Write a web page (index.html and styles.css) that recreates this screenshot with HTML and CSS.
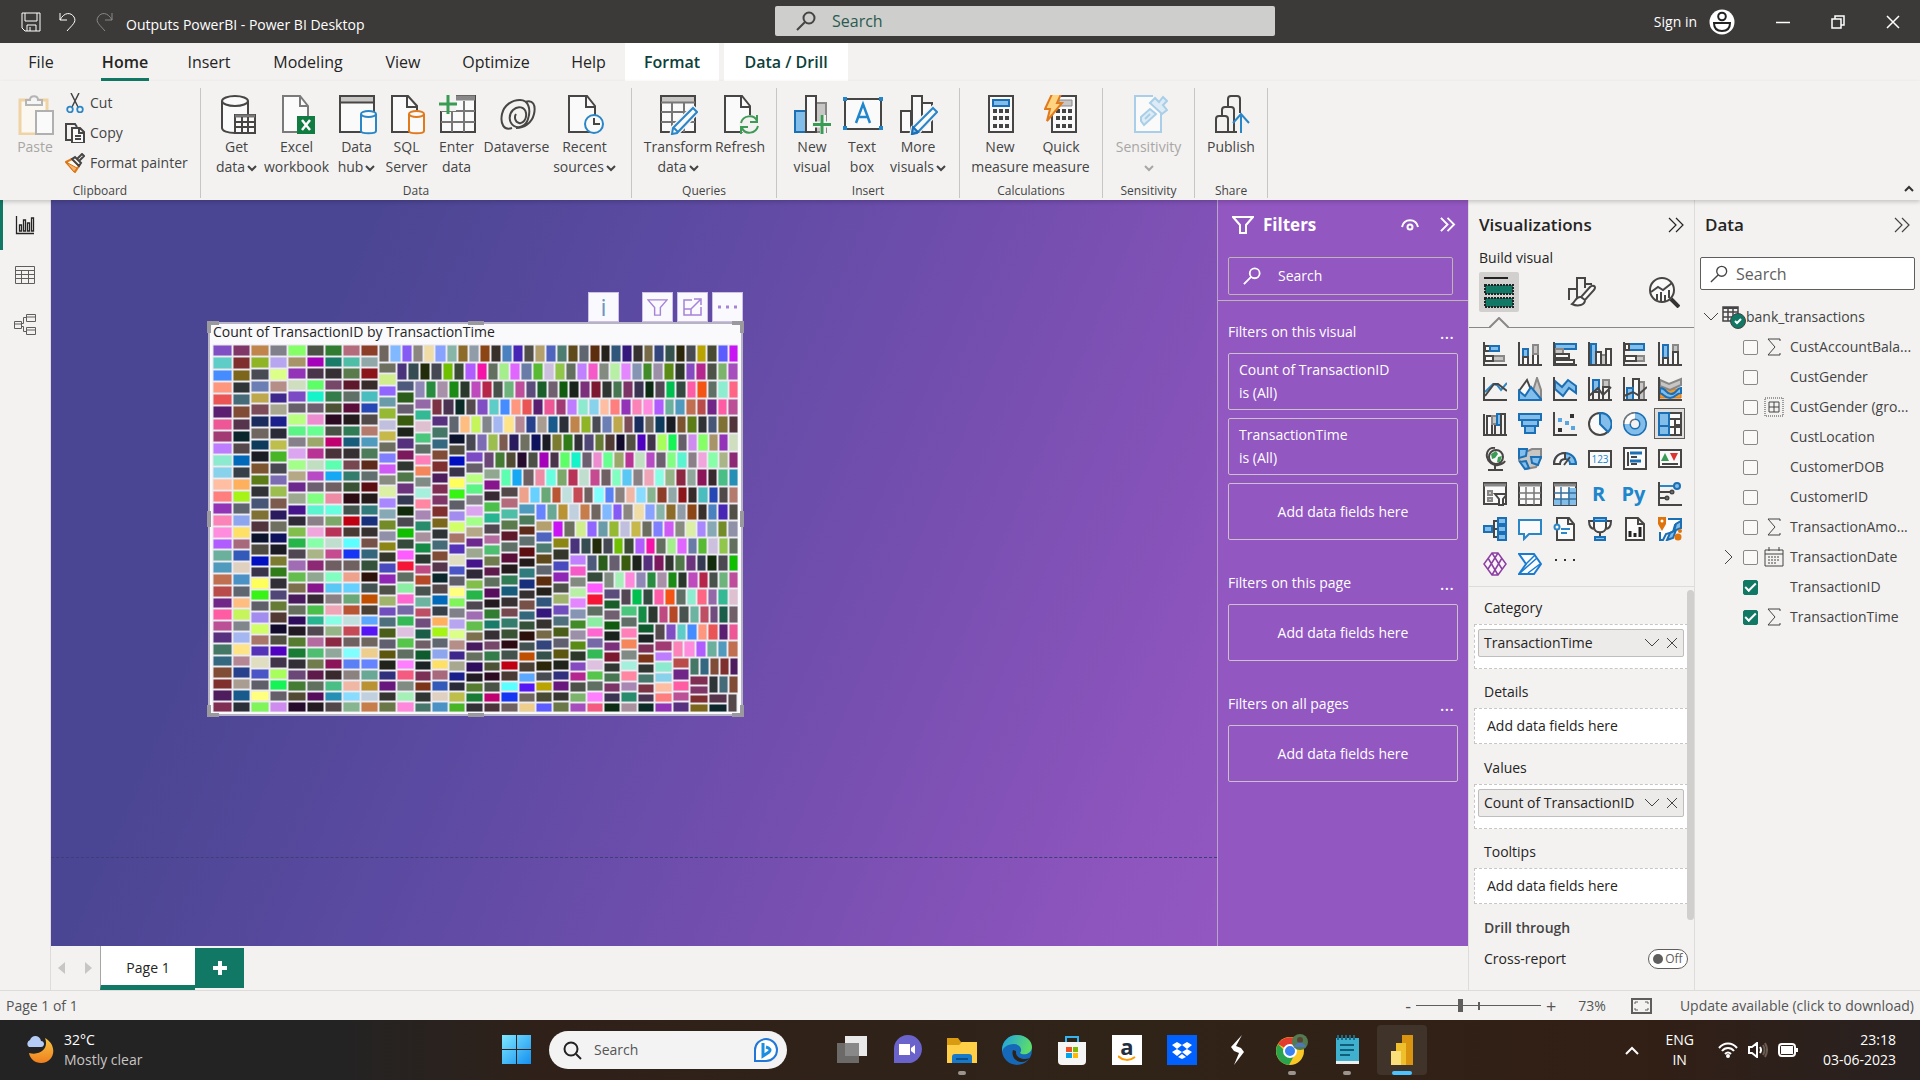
FILE: index.html
```html
<!DOCTYPE html>
<html lang="en">
<head>
<meta charset="utf-8">
<title>Outputs PowerBI - Power BI Desktop</title>
<link rel="stylesheet" href="styles.css">
</head>
<body>
<svg class="defs" aria-hidden="true">
  <symbol id="search" viewBox="0 0 20 20"><path d="M13 1.500a5.500 5.500 0 1 1 0 11 5.500 5.500 0 0 1 0-11zM9 11l-8 8"/></symbol>
  <symbol id="chev" viewBox="0 0 10 8"><path d="M1 2l4 4 4-4"/></symbol>
  <symbol id="expand" viewBox="0 0 16 16"><path d="M1 1l7 7-7 7M8 1l7 7-7 7"/></symbol>
  <symbol id="cross" viewBox="0 0 12 12"><path d="M1 1l10 10M11 1L1 11"/></symbol>
  <symbol id="down" viewBox="0 0 14 8"><path d="M0 0l7 7 7-7"/></symbol>
  <symbol id="sum" viewBox="0 0 14 18"><path d="M13 3V1H1l7 8-7 8h12v-2"/></symbol>
  <symbol id="funnel" viewBox="0 0 22 18"><path d="M1 1h20l-7 8v8H8V9z"/></symbol>
</svg>

<header class="titlebar">
  <div class="quick">
    <button aria-label="Save"><svg width="20" height="20" viewBox="0 0 20 20"><path d="M1 1h18v18H4l-3-3zM4 1v8h12V1M6 19v-6h9v6M9 15v4"/></svg></button>
    <button aria-label="Undo"><svg width="18" height="20" viewBox="0 0 18 20"><path d="M1 1v7h7M1 8c4-8 11-8 14-3 3 5-2 8-7 14"/></svg></button>
    <button aria-label="Redo" class="off"><svg width="18" height="20" viewBox="0 0 18 20"><path d="M17 1v7h-7M17 8C13 0 6 0 3 5c-3 5 2 8 7 14"/></svg></button>
    <h1>Outputs PowerBI - Power BI Desktop</h1>
  </div>
  <label class="topsearch"><svg width="20" height="20"><use href="#search"/></svg><input type="text" placeholder="Search" aria-label="Search"></label>
  <div class="account">
    <button class="signin">Sign in <svg width="26" height="26" viewBox="0 0 26 26"><circle cx="13" cy="13" r="12.500" fill="#fff" stroke="none"/><circle cx="13" cy="7.500" r="3.800" stroke="#222" stroke-width="2"/><path d="M5 14h16c0 5-3 8-8 8s-8-3-8-8z" stroke="#222" stroke-width="2"/></svg></button>
    <button aria-label="Minimize"><svg width="14" height="14" viewBox="0 0 14 14"><path d="M0 7.500h14" stroke-width="1.500"/></svg></button>
    <button aria-label="Restore"><svg width="14" height="14" viewBox="0 0 14 14"><path d="M1 4h9v9H1zM4 4V1h9v9h-3" stroke-width="1.500"/></svg></button>
    <button aria-label="Close"><svg width="14" height="14" viewBox="0 0 14 14"><path d="M1 1l12 12M13 1L1 13" stroke-width="1.500"/></svg></button>
  </div>
</header>

<nav class="tabs">
  <button class="t-file">File</button><button class="t-home on">Home</button><button class="t-insert">Insert</button><button class="t-model">Modeling</button><button class="t-view">View</button><button class="t-opt">Optimize</button><button class="t-help">Help</button><button class="ctx t-format">Format</button><button class="ctx t-drill">Data / Drill</button>
</nav>

<section class="ribbon">
  <div class="group g-clip">
    <div class="items">
      <button class="big off w50"><svg width="36" height="40" viewBox="0 0 36 40"><path d="M2 5h27v34H2z" fill="#fbf8f2" stroke="#f0d3a4" stroke-width="3"/><path d="M8 10V5h4c0-5 8-5 8 0h4v5z" fill="#f5f5f5" stroke="#b5b5b5" stroke-width="2"/><path d="M18 16h17v23H18z" fill="#fafafa" stroke="#b0b0b0" stroke-width="2"/></svg><span>Paste</span></button>
      <div class="small">
        <button><svg width="20" height="20" viewBox="0 0 20 20"><path d="M6 0l7 14M14 0L7 14" stroke="#444" stroke-width="1.500"/><circle cx="5" cy="16.500" r="2.800" stroke="#2a86c7" stroke-width="1.800"/><circle cx="15" cy="16.500" r="2.800" stroke="#2a86c7" stroke-width="1.800"/></svg>Cut</button>
        <button><svg width="20" height="20" viewBox="0 0 20 20"><path d="M7 17H1V1h9l2 3" class="k"/><path d="M7 5h8l4 4v11H7zM14 5v5h5M10 13h6M10 16h6" class="k w"/></svg>Copy</button>
        <button><svg width="20" height="20" viewBox="0 0 20 20"><path d="M1 9l6-3 7 7-4 6z" fill="#fff" stroke="#e07a1c" stroke-width="2"/><path d="M1 9l11 6-3 4z" fill="#f6b26b" stroke="#d9700f"/><path d="M7 6l3-2 6 6-2 3zM12 6l5-5 2 2-5 5" class="k w"/></svg>Format painter</button>
      </div>
    </div>
    <h2>Clipboard</h2>
  </div>
  <div class="group g-data">
    <div class="items">
      <button class="big w50"><svg width="36" height="40" viewBox="0 0 36 40"><path d="M2 6v27c0 3 6 5 13 5s13-2 13-5V6" class="k w"/><ellipse cx="15" cy="6" rx="13" ry="5" class="k w"/><path d="M15 20h20v18H15z" class="k w"/><path d="M15 21h20" stroke="#777" stroke-width="3"/><path d="M15 27h20M15 32h20M22 22v16M28 22v16" class="k"/></svg><span>Get<br>data<svg class="cv" width="10" height="8"><use href="#chev"/></svg></span></button>
      <button class="big w70"><svg width="36" height="40" viewBox="0 0 36 40"><path d="M3 1h17l8 10v26H3z" fill="#fbfbfb" stroke="#7a7a7a" stroke-width="2"/><path d="M20 1v10h8" stroke="#7a7a7a" stroke-width="2"/><path d="M17 21h18v18H17z" fill="#107c41"/><path d="M22 25l8 10M30 25l-8 10" stroke="#fff" stroke-width="2.500"/></svg><span>Excel<br>workbook</span></button>
      <button class="big w50"><svg width="38" height="40" viewBox="0 0 38 40"><path d="M1 1h34v36H1z" class="k w"/><path d="M2 2h32v5H2z" fill="#c8c6c4"/><path d="M1 7.500h34" class="k"/><path d="M22 19v17c0 3 15 3 15 0V19" class="bl w"/><ellipse cx="29.500" cy="19" rx="7.500" ry="3" class="bl w"/></svg><span>Data<br>hub<svg class="cv" width="10" height="8"><use href="#chev"/></svg></span></button>
      <button class="big w50"><svg width="36" height="40" viewBox="0 0 36 40"><path d="M2 1h16l9 10v26H2z" class="k w"/><path d="M17 1v11h10" class="k"/><path d="M19 19v17c0 3 15 3 15 0V19" class="or w"/><ellipse cx="26.500" cy="19" rx="7.500" ry="3" class="or w"/></svg><span>SQL<br>Server</span></button>
      <button class="big w50"><svg width="38" height="40" viewBox="0 0 38 40"><path d="M2 1h34v36H2z" class="k w"/><path d="M2 3h34" stroke="#888" stroke-width="5"/><path d="M2 16h34M2 27h34M13 6v31M25 6v31" stroke="#777" stroke-width="2"/><path d="M0 0h17v16H0z" fill="#f3f2f1"/><path d="M9 0v19M0 9h18" stroke="#3a9b54" stroke-width="3"/></svg><span>Enter<br>data</span></button>
      <button class="big w70"><svg width="36" height="40" viewBox="0 0 36 40"><path d="M12 33C4 36 0 29 2 19 4 10 12 5 20 5c9 0 11 10 8 19-2 7-9 10-14 7s-6-11-1-16 12-3 13 3-3 11-7 10-5-6-3-9M25 7c8-3 11 3 9 12-2 9-10 14-18 14" class="k"/></svg><span>Dataverse</span></button>
      <button class="big w66"><svg width="36" height="40" viewBox="0 0 36 40"><path d="M1 1h18l8 10v26H1z" class="k w"/><path d="M18 1v11h9" class="k"/><circle cx="26" cy="29" r="9" class="bl w"/><path d="M26 23v6h6" class="k"/></svg><span>Recent<br>sources<svg class="cv" width="10" height="8"><use href="#chev"/></svg></span></button>
    </div>
    <h2>Data</h2>
  </div>
  <div class="group g-query">
    <div class="items">
      <button class="big w72"><svg width="38" height="40" viewBox="0 0 38 40"><path d="M1 1h34v36H1z" class="k w"/><path d="M2 2h32v5H2z" fill="#c8c6c4"/><path d="M1 7.500h34M1 17h34M1 27h34M12 8v29M24 8v29" stroke="#777" stroke-width="2"/><path d="M33 13l4 4-20 21-5 1 1-6z" fill="#f8fcff" stroke="#f3f2f1" stroke-width="5"/><path d="M33 13l4 4-20 21-5 1 1-6zM13 32l5 5" class="bl w"/></svg><span>Transform<br>data<svg class="cv" width="10" height="8"><use href="#chev"/></svg></span></button>
      <button class="big w52"><svg width="36" height="40" viewBox="0 0 36 40"><path d="M2 1h17l8 10v26H2z" class="k w"/><path d="M18 1v11h9" class="k"/><circle cx="26" cy="30" r="10" fill="#f3f2f1"/><path d="M18 28c2-8 13-9 16-2M34 20v7h-7M35 31c-2 8-13 9-16 2M18 39v-7h7" stroke="#3f9a56" stroke-width="2"/></svg><span>Refresh</span></button>
    </div>
    <h2>Queries</h2>
  </div>
  <div class="group g-insert">
    <div class="items">
      <button class="big w50"><svg width="38" height="40" viewBox="0 0 38 40"><path d="M22 8h10v29H22z" fill="#c8c6c4" stroke="#888" stroke-width="2"/><path d="M1 16h11v21H1z" class="bf"/><path d="M12 1h10v36H12z" class="k w"/><path d="M18 29.500h20M29 20v20" stroke="#f3f2f1" stroke-width="6"/><path d="M19 29.500h18M28 20v19" stroke="#3a9b54" stroke-width="3"/></svg><span>New<br>visual</span></button>
      <button class="big w50"><svg width="40" height="40" viewBox="0 0 40 40"><path d="M2 4h36v30H2z" class="k w"/><path d="M13 28l7-19 7 19M15 22h10" stroke="#2086cc" stroke-width="2.500"/><path d="M0 2h4v4H0zM36 2h4v4h-4zM0 31h4v4H0zM36 31h4v4h-4z" fill="#2086cc"/></svg><span>Text<br>box</span></button>
      <button class="big w62"><svg width="38" height="40" viewBox="0 0 38 40"><path d="M22 8h10v29H22zM1 16h10v21H1zM12 1h10v36H12z" class="k w"/><path d="M33 13l4 4-20 21-5 1 1-6z" fill="#fff" stroke="#f3f2f1" stroke-width="5"/><path d="M33 13l4 4-20 21-5 1 1-6z" class="bl w"/><path d="M13 32l5 5-6 2z" class="bf"/></svg><span>More<br>visuals<svg class="cv" width="10" height="8"><use href="#chev"/></svg></span></button>
    </div>
    <h2>Insert</h2>
  </div>
  <div class="group g-calc">
    <div class="items">
      <button class="big w60"><svg width="36" height="40" viewBox="0 0 36 40"><path d="M6 1h24v36H6z" class="k w"/><path d="M10 5h16v6H10z" class="bf"/><path d="M10 16h16M10 23h16M10 31h16" stroke="#444" stroke-width="4" stroke-dasharray="4 2"/></svg><span>New<br>measure</span></button>
      <button class="big w62"><svg width="36" height="40" viewBox="0 0 36 40"><path d="M8 1h24v36H8z" class="k w"/><path d="M15 5h13v6H15z" fill="#c8c6c4" stroke="#888"/><path d="M12 16h16M12 23h16M12 31h16" stroke="#444" stroke-width="4" stroke-dasharray="4 2"/><path d="M8-1h9l-4 9h5L3 26l3-12H1z" fill="#ffd480" stroke="#e07a1c" stroke-width="2"/></svg><span>Quick<br>measure</span></button>
    </div>
    <h2>Calculations</h2>
  </div>
  <div class="group g-sens">
    <div class="items">
      <button class="big off w80"><svg width="36" height="40" viewBox="0 0 36 40"><path d="M21 1H3v36h26V18" fill="#fafafa" stroke="#a9cfe8" stroke-width="2"/><path d="M9 22l9-8 6 5-12 11-3-4zM13 24l5-5M18 8l5-5 4 4 4-5 4 4-4 4 4 5-5 4z" fill="#dcebf5" stroke="#a9cfe8" stroke-width="2"/></svg><span>Sensitivity<br><svg class="cv" width="10" height="8"><use href="#chev"/></svg></span></button>
    </div>
    <h2>Sensitivity</h2>
  </div>
  <div class="group g-share">
    <div class="items">
      <button class="big w60"><svg width="36" height="40" viewBox="0 0 36 40"><path d="M14 12V4q0-3 3-3h6q3 0 3 3v14M8 21v-6q0-3 3-3h6q3 0 3 3v22M2 37V24q0-3 3-3h6q3 0 3 3v13zM14 37h9" class="k"/><path d="M27 38V20M19 28l8-9 8 9" class="bl"/></svg><span>Publish</span></button>
    </div>
    <h2>Share</h2>
  </div>
  <button class="collapse" aria-label="Collapse ribbon"><svg width="10" height="8" viewBox="0 0 10 8"><path d="M1 6l4-4 4 4"/></svg></button>
</section>

<main>
  <div class="left">
    <div class="work">
      <nav class="rail">
        <button class="on" aria-label="Report view"><svg width="20" height="20" viewBox="0 0 20 20"><path d="M1.500 1v17.500H19M4.500 16V10h2v6zM8.500 16V5h2v11zM12.500 16V8h2v8zM16.500 16V3h2v13z" stroke-width="1.300"/></svg></button>
        <button aria-label="Data view"><svg width="22" height="20" viewBox="0 0 22 20"><path d="M1.500 1.500h19v17h-19zM1 5.500h20M1 9.500h20M1 13.500h20M7.500 5v14M14.500 5v14"/></svg></button>
        <button aria-label="Model view"><svg width="24" height="24" viewBox="0 0 24 24"><path d="M13.500 1.500h9v7h-9zM1.500 8.500h7v7h-7zM13.500 14.500h9v7h-9zM8.500 10.500h2v-6h3M8.500 13.500h2v5h3M13 4h10M1 11h8M13 17h10"/></svg></button>
      </nav>
      <div class="canvas">
        <div class="fold"></div>
        <div class="vtools">
          <button class="info" aria-label="Information">i</button>
          <button aria-label="Filter"><svg width="21" height="19" viewBox="0 0 22 18"><use href="#funnel"/></svg></button>
          <button aria-label="Focus mode"><svg width="19" height="18" viewBox="0 0 19 18"><path d="M9 2H1v15h17V9M1 11h7v6M8 11l9-9M11 1h7v6"/></svg></button>
          <button aria-label="More options"><svg width="20" height="6" viewBox="0 0 20 6"><path d="M0 3h3M8 3h3M16 3h3" stroke-width="3"/></svg></button>
        </div>
        <figure class="visual">
          <figcaption>Count of TransactionID by TransactionTime</figcaption>
          <svg id="treemap" viewBox="0 0 526 368" role="img" aria-label="Treemap"></svg>
          <i class="h tl"></i><i class="h tr"></i><i class="h bl2"></i><i class="h br"></i><i class="h tc"></i><i class="h bc"></i><i class="h ml"></i><i class="h mr"></i>
        </figure>
      </div>
      <aside class="filters">
        <div class="fhead"><svg width="22" height="18"><use href="#funnel"/></svg><h2>Filters</h2><button aria-label="Hide"><svg width="18" height="12" viewBox="0 0 18 12"><path d="M1 8c2-9 14-9 16 0"/><circle cx="9" cy="8" r="2.500"/></svg></button><button aria-label="Collapse"><svg width="17" height="15"><use href="#expand"/></svg></button></div>
        <label class="fsearch"><svg width="18" height="18"><use href="#search"/></svg><input type="text" placeholder="Search" aria-label="Search filters"></label>
        <div class="flist">
          <section><h3>Filters on this visual<button aria-label="More">...</button></h3>
            <div class="card">Count of TransactionID<br>is (All)</div>
            <div class="card">TransactionTime<br>is (All)</div>
            <div class="card add">Add data fields here</div></section>
          <section><h3>Filters on this page<button aria-label="More">...</button></h3>
            <div class="card add">Add data fields here</div></section>
          <section><h3>Filters on all pages<button aria-label="More">...</button></h3>
            <div class="card add">Add data fields here</div></section>
        </div>
      </aside>
    </div>
    <div class="pages">
      <button aria-label="Previous page"><svg width="7" height="12" viewBox="0 0 7 12"><path d="M7 0v12L0 6z"/></svg></button>
      <button aria-label="Next page"><svg width="7" height="12" viewBox="0 0 7 12"><path d="M0 0v12l7-6z"/></svg></button>
      <button class="page">Page 1</button><button class="plus" aria-label="New page"><svg width="14" height="14" viewBox="0 0 14 14"><path d="M7 0v14M0 7h14"/></svg></button>
    </div>
  </div>

  <aside class="viz">
    <div class="phead"><h2>Visualizations</h2><button aria-label="Collapse"><svg width="16" height="16"><use href="#expand"/></svg></button></div>
    <h3>Build visual</h3>
    <div class="modes">
      <button class="on" aria-label="Build visual"><svg width="32" height="32" viewBox="0 0 32 32"><path d="M1 2h24" stroke="#222" stroke-width="2"/><path d="M2 9h28v9H2zM2 22h28v9H2z" fill="#117865" stroke="#222" stroke-width="2" stroke-dasharray="2 1"/></svg></button>
      <button aria-label="Format visual"><svg width="28" height="30" viewBox="0 0 28 30"><path d="M1 23V12h8V1h8v10M9 12v9M17 7h7" class="k"/><path d="M26 9q2 1 0 4l-9 10-4-3 9-10q2-2 4-1zM13 20c-5-1-5 4-9 7 6 3 13 1 13-4" class="k w"/></svg></button>
      <button aria-label="Analytics"><svg width="31" height="31" viewBox="0 0 31 31"><circle cx="13" cy="13" r="12" class="k w"/><path d="M2 15l7-5 5 3 9-7M8 23v-6M12 24v-9M16 24v-6M20 21v-8" class="k"/><path d="M22 22l8 8" stroke="#333" stroke-width="4"/></svg></button>
    </div>
    <svg class="caret" width="20" height="11" viewBox="0 0 20 11"><path d="M0 11L10 1l10 10"/></svg>
    <div class="gallery">
      <button aria-label="Stacked bar"><svg viewBox="0 0 24 24"><path d="M2 4h14v5H2z" class="k w"/><path d="M7 4h9v5H7z" class="bf"/><path d="M2 14h19v5H2z" class="gr"/><path d="M2 14h8v5H2z" class="k w"/><path d="M1 0v23h23" class="k"/></svg></button>
      <button aria-label="Stacked column"><svg viewBox="0 0 24 24"><path d="M5 7h5v8H5z" class="bf"/><path d="M5 15h5v8H5zM15 12h5v11h-5z" class="k w"/><path d="M15 3h5v9h-5z" class="gr"/><path d="M1 0v23h23" class="k"/></svg></button>
      <button aria-label="Clustered bar"><svg viewBox="0 0 24 24"><path d="M2 2h21v5H2z" class="bf"/><path d="M2 7h8v5H2z" class="gr"/><path d="M2 12h14v4H2zM2 18h19v4H2z" class="k w"/><path d="M1 0v23h23" class="k"/></svg></button>
      <button aria-label="Clustered column"><svg viewBox="0 0 24 24"><path d="M3 2h5v21H3z" class="bf"/><path d="M13 13h5v10h-5z" class="gr"/><path d="M8 10h5v13H8zM18 7h5v16h-5z" class="k w"/><path d="M1 0v23h23" class="k"/></svg></button>
      <button aria-label="100% bar"><svg viewBox="0 0 24 24"><path d="M2 2h19v6H2z" class="bf"/><path d="M2 14h19v5H2z" class="gr"/><path d="M2 14h11v5H2zM2 2h4v6H2z" class="k w"/><path d="M1 0v23h23" class="k"/></svg></button>
      <button aria-label="100% column"><svg viewBox="0 0 24 24"><path d="M5 3h5v13H5z" class="bf"/><path d="M15 3h5v7h-5z" class="gr"/><path d="M5 16h5v7H5zM15 10h5v13h-5z" class="k w"/><path d="M1 0v23h23" class="k"/></svg></button>
      <button aria-label="Line"><svg viewBox="0 0 24 24"><path d="M2 15l8-8 4 1 4 5 6-7" class="bl"/><path d="M2 19l9-12h4l9 7" class="k"/><path d="M1 0v23h23" class="k"/></svg></button>
      <button aria-label="Area"><svg viewBox="0 0 24 24"><path d="M12 23l7-22 4 12v10z" class="gr"/><path d="M1 14L9 3l8 20H1z" class="k w"/><path d="M1 14l6 5 6-9 10 12v1H1z" class="bf"/></svg></button>
      <button aria-label="Stacked area"><svg viewBox="0 0 24 24"><path d="M2 4l7 6 6-7 8 6v7l-7-5-6 8-8-7z" class="bf"/><path d="M1 0v23h23" class="k"/></svg></button>
      <button aria-label="Line and stacked column"><svg viewBox="0 0 24 24"><path d="M5 3h6v12H5z" class="bf"/><path d="M15 3h6v7h-6z" class="gr"/><path d="M5 15h6v8H5zM15 10h6v13h-6zM1 19l9-8 5 7 8-8" class="k"/><path d="M1 0v23h23" class="k"/></svg></button>
      <button aria-label="Line and clustered column"><svg viewBox="0 0 24 24"><path d="M16 5h5v18h-5z" class="gr"/><path d="M10 2h6v21h-6z" class="k w"/><path d="M4 11h6v12H4z" class="bf"/><path d="M1 19l9-4 5 3 9-8M1 0v23h23" class="k"/></svg></button>
      <button aria-label="Ribbon"><svg viewBox="0 0 24 24"><path d="M2 12h21v9H2z" fill="#f39a2e" stroke="#d9700f"/><path d="M2 3l9 4 12-5v6L12 13 2 9z" class="gr"/><path d="M2 11c7 0 5 6 11 6s5-6 10-6v5c-5 0-5 5-11 5S6 17 2 16z" class="bf"/><path d="M1 0v23h23" class="k"/></svg></button>
      <button aria-label="Waterfall"><svg viewBox="0 0 24 24"><path d="M4 4h5v19H4z" class="k w"/><path d="M9 4h5v8H9z" class="gr"/><path d="M14 2h4v11h-4z" class="bf"/><path d="M18 2h4v21h-4zM12 13v10M1 2v21h23" class="k"/></svg></button>
      <button aria-label="Funnel"><svg viewBox="0 0 24 24"><path d="M1 2h22v6H1zM4 8h16v6H4zM7 14h10v7H7z" class="bf"/></svg></button>
      <button aria-label="Scatter"><svg viewBox="0 0 24 24"><path d="M5 6h4v4H5zM12 9h4v4h-4zM18 14h4v4h-4z" fill="#5aa5de"/><path d="M17 2h4v4h-4zM5 16h4v4H5z" fill="#333"/><path d="M1 0v23h23" class="k"/></svg></button>
      <button aria-label="Pie"><svg viewBox="0 0 24 24"><circle cx="12" cy="12" r="11" class="k w"/><path d="M12 1a11 11 0 0 1 8 19l-8-8z" class="bf"/></svg></button>
      <button aria-label="Donut"><svg viewBox="0 0 24 24"><circle cx="12" cy="12" r="8" stroke="#1a6fb5" stroke-width="8"/><circle cx="12" cy="12" r="8" stroke="#83bdea" stroke-width="5"/><path d="M4 12a8 8 0 0 1 8-8" stroke="#777" stroke-width="8"/><path d="M4 12a8 8 0 0 1 8-8" stroke="#fff" stroke-width="5"/></svg></button>
      <button aria-label="Treemap" class="sel"><svg viewBox="0 0 24 24"><path d="M1 1h22v22H1zM12 7h11M17 7v16M17 13h6M12 15h11" class="k w"/><path d="M1 1h10v22H1zM1 14h10" class="bf"/></svg></button>
      <button aria-label="Map"><svg viewBox="0 0 24 24"><circle cx="13" cy="10" r="7" class="k w"/><path d="M8 7l5-3 2 3-3 4-3 1zM15 10l4-1-2 6h-3z" fill="#3a9b54"/><path d="M12 1C6 0 3 5 4 10s6 9 11 8 6-2 7-4M12 18v4M5 23h15" class="k"/></svg></button>
      <button aria-label="Filled map"><svg viewBox="0 0 24 24"><path d="M1 2l9 2 4-2 9 0v9l-5 9-5 1-4 1-8-9z" class="gr"/><path d="M1 2h8l-1 7-7 2zM13 10h10l-3 8-6-2zM2 15l6-1 3 7-4 1z" class="bf"/></svg></button>
      <button aria-label="Gauge"><svg viewBox="0 0 24 24"><path d="M1 17a11 11 0 0 1 22 0h-6a5 5 0 0 0-10 0z" class="bf"/><path d="M1 17C1 11 5 6 12 6v6c-3 0-5 2-5 5zM11 18l6-8" class="k w"/></svg></button>
      <button aria-label="Card"><svg viewBox="0 0 24 24"><path d="M1 4h22v16H1z" class="k w"/><text x="12" y="16" class="n">123</text></svg></button>
      <button aria-label="Multi-row card"><svg viewBox="0 0 24 24"><path d="M1 1h22v21H1z" class="k w"/><path d="M5 5v14M8 10h6M8 17h6" class="k"/><path d="M7 6h12M7 14h11" stroke="#1a6fb5" stroke-width="3"/></svg></button>
      <button aria-label="KPI"><svg viewBox="0 0 24 24"><path d="M1 3h22v17H1z" class="k w"/><path d="M3 14l4-8 4 8z" fill="#3a9b54"/><path d="M12 6h8l-4 8z" fill="#d33"/><path d="M4 17h16" class="k"/></svg></button>
      <button aria-label="Slicer"><svg viewBox="0 0 24 24"><path d="M1 1h22v21H1z" class="k w"/><path d="M1 3h22" stroke="#888" stroke-width="3"/><path d="M5 9h4v4H5zM5 16h4v3H5z" class="gr"/><path d="M12 12h12l-4 5v6h-4v-6z" class="k w"/></svg></button>
      <button aria-label="Table"><svg viewBox="0 0 24 24"><path d="M1 1h22v22H1z" class="k w"/><path d="M1 3h22" stroke="#888" stroke-width="3"/><path d="M1 11h22M1 17h22M8 5v18M16 5v18" stroke="#777" stroke-width="1.500"/></svg></button>
      <button aria-label="Matrix"><svg viewBox="0 0 24 24"><path d="M1 1h22v22H1z" class="k w"/><path d="M15 6h8v17H1v-6h14z" fill="#83bdea"/><path d="M1 3h22" stroke="#888" stroke-width="3"/><path d="M1 11h22M1 17h22M8 5v18M16 5v18" stroke="#386f9d" stroke-width="1.500"/></svg></button>
      <button class="ry">R</button>
      <button class="ry">Py</button>
      <button aria-label="Key influencers"><svg viewBox="0 0 24 24"><path d="M2 4h15" class="bl"/><circle cx="19" cy="4" r="3" class="bf"/><path d="M2 10h10M2 16h6" class="k"/><circle cx="14" cy="10" r="1.500" class="k"/><circle cx="9" cy="16" r="1.500" class="k"/><path d="M1 0v23h23" class="k"/></svg></button>
      <button aria-label="Decomposition tree"><svg viewBox="0 0 24 24"><path d="M8 12h7M11 12V4h4M11 12v8h4" class="k"/><path d="M1 9h8v6H1zM15 1h8v6h-8zM15 9h8v6h-8zM15 17h8v6h-8z" class="bf"/></svg></button>
      <button aria-label="Q and A"><svg viewBox="0 0 24 24"><path d="M1 3h22v14H11l-5 5v-5H1z" class="bl w"/></svg></button>
      <button aria-label="Narrative"><svg viewBox="0 0 24 24"><path d="M4 1h12l5 6v16H4zM15 1v6h6" class="k w"/><path d="M8 12h9M8 16h6" class="bl"/><circle cx="4" cy="10" r="2.500" class="bl w"/></svg></button>
      <button aria-label="Goals"><svg viewBox="0 0 24 24"><path d="M6 1h12v9c0 7-12 7-12 0zM6 4H1c0 6 3 8 6 8M18 4h5c0 6-3 8-6 8M12 15v5" class="k w"/><path d="M6 1h12v3H6zM7 20h10v3H7z" class="bf"/></svg></button>
      <button aria-label="Paginated report"><svg viewBox="0 0 24 24"><path d="M3 1h12l6 6v16H3zM15 1v6h6" class="k w"/><path d="M7 20v-6M12 20v-4M17 20V10" stroke="#222" stroke-width="3"/></svg></button>
      <button aria-label="Azure map"><svg viewBox="0 0 24 24"><path d="M10 2h13v3l-6 3-2 7-7 2-3 6H2v-8" fill="#fff" stroke="#1a6fb5" stroke-width="2"/><path d="M23 4v7l-5 2-3 8-6 2 3-7 4-2 2-7z" class="bf"/><path d="M4 14L0 7V0h8v7z" fill="#e0740c"/><circle cx="4" cy="4" r="1.500" fill="#fff"/><circle cx="20" cy="20" r="3.500" fill="#e0740c"/><circle cx="22" cy="14" r="2" fill="#e0740c"/></svg></button>
      <button aria-label="Power Apps"><svg viewBox="0 0 24 24"><path d="M9 1h6l8 11-8 11H9L1 12zM15 1L5 17M9 1l10 16M5 6l10 17M19 6L9 23" stroke="#8b3fa0" stroke-width="1.500" fill="#faf5fb"/></svg></button>
      <button aria-label="Power Automate"><svg viewBox="0 0 24 24"><path d="M1 2h15l7 10-7 10H1l7-10z" stroke="#1a7bd0" stroke-width="2" fill="#fafcff"/><path d="M8 12l9-9M2 21L19 6M10 21l12-9" stroke="#1a7bd0" stroke-width="1.500"/></svg></button>
      <button aria-label="More visuals"><svg viewBox="0 0 24 24"><path d="M2 8h2M11 8h2M20 8h2" stroke="#333" stroke-width="2"/></svg></button>
    </div>
    <div class="wells">
      <h4>Category</h4>
      <div class="well"><div class="chip">TransactionTime<button aria-label="Options"><svg width="14" height="8"><use href="#down"/></svg></button><button aria-label="Remove"><svg width="12" height="12"><use href="#cross"/></svg></button></div></div>
      <h4>Details</h4>
      <div class="well empty">Add data fields here</div>
      <h4>Values</h4>
      <div class="well"><div class="chip">Count of TransactionID<button aria-label="Options"><svg width="14" height="8"><use href="#down"/></svg></button><button aria-label="Remove"><svg width="12" height="12"><use href="#cross"/></svg></button></div></div>
      <h4>Tooltips</h4>
      <div class="well empty">Add data fields here</div>
      <h4 class="strong">Drill through</h4>
      <div class="cross"><span>Cross-report</span><button role="switch" aria-checked="false" aria-label="Cross-report"><i></i>Off</button></div>
      <div class="thumb"></div>
    </div>
  </aside>

  <aside class="data">
    <div class="phead"><h2>Data</h2><button aria-label="Collapse"><svg width="16" height="16"><use href="#expand"/></svg></button></div>
    <label class="dsearch"><svg width="18" height="18"><use href="#search"/></svg><input type="text" placeholder="Search" aria-label="Search data"></label>
    <div class="table"><svg class="tw" width="14" height="8"><use href="#down"/></svg><svg width="24" height="24" viewBox="0 0 24 24"><path d="M1 2h15v14H1zM1 7h15M1 12h15M6 4v12M11 4v12" stroke="#444" stroke-width="1.500"/><path d="M1 3h15" stroke="#444" stroke-width="2"/><circle cx="16" cy="16" r="7.500" fill="#117865"/><path d="M13 16l2 2 4-4" stroke="#fff" stroke-width="2"/></svg>bank_transactions</div>
    <ul>
      <li><span></span><input type="checkbox" id="f1"><svg width="14" height="18"><use href="#sum"/></svg><label for="f1">CustAccountBala...</label></li>
      <li><span></span><input type="checkbox" id="f2"><b></b><label for="f2">CustGender</label></li>
      <li><span></span><input type="checkbox" id="f3"><svg width="20" height="20" viewBox="0 0 20 20"><path d="M1 1h18v18H1z" stroke-dasharray="1 1"/><path d="M5 5h10v10H5zM10 5v10M5 10h10"/></svg><label for="f3">CustGender (gro...</label></li>
      <li><span></span><input type="checkbox" id="f4"><b></b><label for="f4">CustLocation</label></li>
      <li><span></span><input type="checkbox" id="f5"><b></b><label for="f5">CustomerDOB</label></li>
      <li><span></span><input type="checkbox" id="f6"><b></b><label for="f6">CustomerID</label></li>
      <li><span></span><input type="checkbox" id="f7"><svg width="14" height="18"><use href="#sum"/></svg><label for="f7">TransactionAmo...</label></li>
      <li><span><svg width="8" height="14" viewBox="0 0 8 14"><path d="M0 0l7 7-7 7"/></svg></span><input type="checkbox" id="f8"><svg width="20" height="20" viewBox="0 0 20 20"><path d="M1 3h18v16H1zM1 7h18M5 0v4M15 0v4"/><path d="M4 10h12M4 13h12M4 16h8" stroke-dasharray="2 1"/></svg><label for="f8">TransactionDate</label></li>
      <li><span></span><input type="checkbox" id="f9" checked><b></b><label for="f9">TransactionID</label></li>
      <li><span></span><input type="checkbox" id="f10" checked><svg width="14" height="18"><use href="#sum"/></svg><label for="f10">TransactionTime</label></li>
    </ul>
  </aside>
</main>

<footer class="status">
  <span>Page 1 of 1</span>
  <div class="zoom"><button aria-label="Zoom out">-</button><input type="range" min="10" max="190" value="73" aria-label="Zoom"><button aria-label="Zoom in">+</button></div>
  <span class="pct">73%</span>
  <button class="fit" aria-label="Fit to page"><svg width="21" height="16" viewBox="0 0 21 16"><path d="M1 1h19v14H1z" stroke-width="2"/><path d="M7 4H4v2M14 4h3v2M7 12H4v-2M14 12h3v-2"/></svg></button>
  <a href="#">Update available (click to download)</a>
</footer>

<div class="taskbar">
  <button class="weather"><svg width="30" height="30" viewBox="0 0 30 30"><defs><linearGradient id="mn" x2="0" y2="1"><stop stop-color="#f6c544"/><stop offset="1" stop-color="#f07f1e"/></linearGradient></defs><path d="M20 3c13 7 10 25-4 25C10 28 5 24 4 18c12 3 20-5 16-15z" fill="url(#mn)"/><path d="M4 12a4 4 0 0 1 1-7c2-6 10-5 11 1 4 0 4 6 0 6z" fill="#b5cdf6"/></svg><span>32°C<br><em>Mostly clear</em></span></button>
  <div class="apps">
    <button class="start" aria-label="Start"><svg width="30" height="30" viewBox="0 0 30 30"><path d="M0 0h14v14H0zM15 0h14v14H15zM0 15h14v14H0zM15 15h14v14H15z" fill="url(#wn)"/><defs><linearGradient id="wn" x2="1" y2="1"><stop stop-color="#7fe8ff"/><stop offset="1" stop-color="#1490f0"/></linearGradient></defs></svg></button>
    <label class="tsearch"><svg width="19" height="19" viewBox="0 0 19 19"><circle cx="8" cy="8" r="6.500"/><path d="M13 13l5 5"/></svg><input type="text" placeholder="Search" aria-label="Search Windows"><svg width="26" height="26" viewBox="0 0 26 26"><path d="M2 24V13A11 11 0 1 1 13 24z" fill="#fff" stroke="#2277d8" stroke-width="2"/><path d="M10 6v13l6-4c2-2 1-4-3-5" stroke="#1b8ee0" stroke-width="3"/></svg></label>
    <button aria-label="Task view"><svg width="30" height="30" viewBox="0 0 30 30"><path d="M8 1h22v20H8z" fill="#e9e9e9"/><path d="M0 8h22v20H0z" fill="#777" opacity=".85"/></svg></button>
    <button aria-label="Chat"><svg width="30" height="30" viewBox="0 0 30 30"><path d="M2 28V15A14 14 0 1 1 15 28z" fill="#6a63cc"/><path d="M7 9h11v11H7zM19 13l4-3v9l-4-3z" fill="#fff"/></svg></button>
    <button class="run" aria-label="Explorer"><svg width="30" height="30" viewBox="0 0 30 30"><path d="M0 3h11l3 4h16v21H0z" fill="#d99b10"/><path d="M0 10h12l3-3h15v21H0z" fill="#ffcf48"/><path d="M5 28v-6q0-3 3-3h14q3 0 3 3v6z" fill="#1679c9"/><path d="M9 24h12" stroke="#0a4f8a" stroke-width="2"/></svg></button>
    <button aria-label="Edge"><svg width="30" height="30" viewBox="0 0 30 30"><defs><linearGradient id="ed" x2="1" y2=".3"><stop stop-color="#1ca0e8"/><stop offset="1" stop-color="#5bdc6c"/></linearGradient></defs><circle cx="15" cy="15" r="15" fill="#1668b8"/><path d="M0 15C0 6 7 0 15 0c9 0 15 6 15 12 0 7-9 9-12 6 3-3 0-9-6-9-7 0-12 4-12 9z" fill="url(#ed)"/><path d="M11 15c-2 6 2 12 9 12 3 0 6-2 8-4-8 3-15-1-14-7z" fill="#2d2219"/></svg></button>
    <button aria-label="Store"><svg width="30" height="30" viewBox="0 0 30 30"><path d="M9 7V2h12v5" stroke="#35b4ef" stroke-width="2"/><path d="M1 7h28v19q0 4-4 4H5q-4 0-4-4z" fill="#f5f5f5"/><path d="M9 12h6v5H9z" fill="#f25022"/><path d="M16 12h5v5h-5z" fill="#7fba00"/><path d="M9 18h6v5H9z" fill="#00a4ef"/><path d="M16 18h5v5h-5z" fill="#ffb900"/></svg></button>
    <button class="az"><span>a<svg width="18" height="6" viewBox="0 0 18 6"><path d="M0 1c5 5 12 5 17 1" stroke="#f90" stroke-width="2"/></svg></span></button>
    <button aria-label="Dropbox"><svg width="30" height="30" viewBox="0 0 30 30"><path d="M0 0h30v30H0z" fill="#0061fe"/><path d="M10 7l5 3-5 4-5-4zM20 7l5 3-5 4-5-4zM10 14l5 3-5 4-5-4zM20 14l5 3-5 4-5-4zM15 19l4 3-4 2-4-2z" fill="#fff"/></svg></button>
    <button aria-label="Notes app"><svg width="30" height="30" viewBox="0 0 30 30"><path d="M20 0L9 12l3 4 5 2-5 12 10-13-3-4-5-2z" fill="#fff"/></svg></button>
    <button class="run" aria-label="Chrome"><svg width="34" height="34" viewBox="0 0 34 34"><circle cx="15" cy="18" r="14" fill="#f9c824"/><path d="M3 11a14 14 0 0 1 24 0L15 18z" fill="#e33b2e"/><path d="M3 11a14 14 0 0 0 11 21l6-11-8-1z" fill="#29a34c"/><circle cx="15" cy="18" r="6" fill="#3b82f0" stroke="#fff" stroke-width="2"/><circle cx="25" cy="9" r="8" fill="#547a50"/><circle cx="25" cy="7" r="3" fill="#5a4334"/><path d="M19 14c2-6 10-6 12 0z" fill="#4d79b8"/></svg></button>
    <button class="run" aria-label="Notepad"><svg width="30" height="30" viewBox="0 0 30 30"><path d="M4 3h23v25H4z" fill="#3fb1cf"/><path d="M4 26h23v3H4z" fill="#eee"/><path d="M6 0v5M10 0v5M14 0v5M18 0v5M22 0v5" stroke="#1c6c87" stroke-width="2"/><path d="M8 10h14M8 15h14M8 20h10" stroke="#0f5f7a" stroke-width="2"/></svg></button>
    <button class="active" aria-label="Power BI"><svg width="30" height="30" viewBox="0 0 30 30"><path d="M15 0h11v30H15z" fill="#d9930f"/><path d="M9 8h10v22H9z" fill="#f0c02c"/><path d="M4 16h10v14H4z" fill="#f9e07a"/></svg></button>
  </div>
  <div class="tray">
    <button aria-label="Hidden icons"><svg width="14" height="9" viewBox="0 0 14 9"><path d="M1 8l6-6 6 6"/></svg></button>
    <button class="lang">ENG<br>IN</button>
    <button class="net" aria-label="Network"><svg width="20" height="16" viewBox="0 0 20 16"><path d="M1 6c5-6 13-6 18 0M4 9c3-4 9-4 12 0M7 12c2-2 4-2 6 0"/><circle cx="10" cy="14" r="1" fill="#fff"/></svg><svg width="20" height="16" viewBox="0 0 20 16"><path d="M1 5h3l5-4v14l-5-4H1zM12 5q2 3 0 6"/><path d="M15 3q3 5 0 10M17 1q4 7 0 14" stroke="#6b5c52"/></svg><svg width="21" height="14" viewBox="0 0 21 14"><rect x="1" y="1" width="16" height="12" rx="3"/><path d="M4 4h10v6H4z" fill="#fff"/><path d="M19 5v4"/></svg></button>
    <button class="clock">23:18<br>03-06-2023</button>
  </div>
</div>
<script src="script.js"></script>
</body>
</html>
```
FILE: styles.css
```css
* { box-sizing: border-box; }
html { height: 100%; }
body {
  margin: 0;
  min-height: 100%;
  display: flex;
  flex-direction: column;
  font: 14px/20px "Open Sans", "Noto Sans", sans-serif;
  color: #252423;
  background: #f3f2f1;
}
h1, h2, h3, h4, figure, ul { margin: 0; padding: 0; font-weight: 400; font-size: 14px; }
button { font: inherit; color: inherit; background: none; border: 0; padding: 0; margin: 0; display: flex; align-items: center; justify-content: center; }
input { font: inherit; color: inherit; border: 0; background: none; padding: 0; margin: 0; min-width: 0; outline: 0; }
input::placeholder { color: inherit; opacity: 1; }
svg { fill: none; stroke-width: 1; flex: none; }
.defs { position: absolute; width: 0; height: 0; }
.k { stroke: #484644; stroke-width: 2; }
.bl { stroke: #2a86c7; stroke-width: 2; }
.or { stroke: #e07a1c; stroke-width: 2; }
.w { fill: #fafafa; }
.bf { fill: #83bdea; stroke: #1a6fb5; stroke-width: 2; }
.gr { fill: #c8c6c4; stroke: #8a8886; stroke-width: 2; }

/* title bar */
.titlebar { height: 43px; background: #3b3a38; color: #fff; display: grid; grid-template-columns: 1fr 500px 1fr; align-items: center; }
.titlebar svg { stroke: #fff; }
.quick { display: flex; align-items: center; gap: 18px; padding-left: 21px; }
.quick .off { opacity: .4; }
.quick h1 { padding-top: 6px; margin-left: -5px; }
.topsearch { height: 30px; background: #cececc; border-radius: 2px; display: flex; align-items: center; gap: 16px; padding-left: 21px; color: #2b5a50; font-size: 16px; align-self: start; margin: 6px 0 0 65px; width: 500px; }
.titlebar .topsearch svg { stroke: #444; stroke-width: 2; }
.account { display: flex; align-items: center; justify-content: flex-end; padding-right: 20px; gap: 41px; }
.signin { gap: 12px; }

/* tabs */
.tabs { height: 38px; display: flex; font-size: 16px; }
.tabs button { position: relative; }
.t-file { width: 82px; }
.t-home { width: 86px; font-weight: 600; }
.t-home::after { content: ""; position: absolute; left: 19px; right: 19px; bottom: 0; height: 3px; background: #117865; }
.t-insert { width: 82px; }
.t-model { width: 116px; }
.t-view { width: 74px; }
.t-opt { width: 112px; }
.t-help { width: 73px; }
.tabs .ctx { background: #fff; color: #0c4039; font-weight: 600; }
.t-format { width: 94px; margin-right: 5px; }
.t-drill { width: 124px; }

/* ribbon */
.ribbon { position: relative; height: 119px; display: flex; padding: 7px 0 2px; z-index: 2; box-shadow: 0 2px 4px rgba(0,0,0,.18); background: #f3f2f1; color: #444; }
.group { display: flex; flex-direction: column; border-right: 1px solid #c8c6c4; }
.group h2 { font-size: 12px; line-height: 14px; text-align: center; }
.items { display: flex; height: 96px; justify-content: center; }
.g-clip { width: 201px; }
.g-clip .items { justify-content: flex-start; padding-left: 10px; }
.g-data { width: 431px; }
.g-data .items { padding-right: 3px; }
.g-query { width: 145px; }
.g-insert { width: 183px; }
.g-calc { width: 143px; }
.g-sens { width: 92px; }
.g-share { width: 73px; }
.big { flex-direction: column; justify-content: flex-start; padding-top: 7px; gap: 2px; text-align: center; white-space: nowrap; }
.big > svg { margin-left: 2px; }
.big span { display: block; }
.big.off { color: #a8a6a4; }
.cv { stroke: currentColor; stroke-width: 2; margin-left: 2px; }
.w50 { width: 50px; } .w52 { width: 52px; } .w60 { width: 60px; } .w62 { width: 62px; } .w66 { width: 66px; } .w70 { width: 70px; } .w72 { width: 72px; } .w80 { width: 80px; }
.small { display: flex; flex-direction: column; padding-left: 5px; }
.small button { height: 30px; gap: 5px; justify-content: flex-start; }
.collapse { position: absolute; right: 6px; bottom: 7px; }
.collapse svg { stroke: #333; stroke-width: 2; }

/* work area */
main { flex: 1; display: flex; min-height: 790px; }
.left { flex: 1; display: flex; flex-direction: column; min-width: 0; }
.work { flex: 1; display: flex; }
.rail { width: 51px; border-right: 1px solid #dedcda; display: flex; flex-direction: column; }
.rail button { height: 50px; }
.rail .on { border-left: 3px solid #117865; padding-right: 3px; }
.rail svg { stroke: #605e5c; }
.rail .on svg { stroke: #252423; }
.canvas { flex: 1; position: relative; background: linear-gradient(113deg, #4b4693 0, #4b4693 22%, #5b4aa1 42%, #714eae 64%, #8452b8 82%, #9056bf 94%, #9257c1 100%); }
.fold { position: absolute; left: 0; right: 0; top: 657px; border-top: 1px dashed #3d3f78; }
.vtools { position: absolute; left: 537px; top: 92px; display: flex; gap: 4px; height: 30px; }
.vtools button { width: 31px; background: #fafafe; border: 1px solid #cdbfe6; }
.vtools .info { margin-right: 19px; color: #6f96c0; font-size: 24px; }
.vtools svg { stroke: #a583d6; stroke-width: 1.5; }
.visual { position: absolute; left: 157px; top: 122px; width: 535px; height: 394px; background: #fafafd; border: 2px solid #b5b3c4; padding: 0 2px; }
.visual figcaption { height: 20px; line-height: 16px; padding-left: 1px; }
#treemap { display: block; width: 526px; height: 368px; }
.h { position: absolute; width: 12px; height: 12px; border: 0 solid #9a9a9e; }
.tl { left: -3px; top: -3px; border-width: 4px 0 0 4px; }
.tr { right: -3px; top: -3px; border-width: 4px 4px 0 0; }
.bl2 { left: -3px; bottom: -3px; border-width: 0 0 4px 4px; }
.br { right: -3px; bottom: -3px; border-width: 0 4px 4px 0; }
.tc { left: 258px; top: -3px; width: 16px; border-top-width: 4px; }
.bc { left: 258px; bottom: -3px; width: 16px; border-bottom-width: 4px; }
.ml { left: -3px; top: 187px; height: 16px; border-left-width: 4px; }
.mr { right: -3px; top: 187px; height: 16px; border-right-width: 4px; }

/* filters */
.filters { width: 251px; background: #9257c1; border-left: 1px solid #b9a5cc; color: #fff; }
.filters svg { stroke: #fff; }
.fhead { display: flex; align-items: center; height: 57px; padding: 0 12px 8px 14px; }
.fhead svg { stroke-width: 2; }
.fhead h2 { font-size: 17px; font-weight: 700; flex: 1; margin-left: 9px; }
.fhead button + button { margin-left: 20px; }
.fsearch { display: flex; align-items: center; gap: 17px; height: 38px; width: 225px; margin: 0 0 5px 10px; border: 1px solid #c0b5b5; padding-left: 14px; border-radius: 2px; }
.fsearch svg { stroke-width: 2; }
.flist { border-top: 1px solid #c0b5b5; padding: 16px 10px 0 10px; }
.flist section { margin-bottom: 28px; }
.flist h3 { height: 36px; display: flex; justify-content: space-between; padding-top: 5px; align-items: start; }
.flist h3 button { font-size: 18px; margin-right: 4px; }
.card { height: 57px; margin-bottom: 8px; border: 1px solid #cdbfcb; border-radius: 2px; padding: 4px 10px; line-height: 23px; }
.card.add { display: flex; align-items: center; justify-content: center; margin: 0; }

/* page tabs */
.pages { height: 44px; display: flex; margin-left: 50px; border-left: 1px solid #dedcda; }
.pages svg { fill: #c8c6c4; }
.pages button:nth-child(1) { width: 20px; }
.pages button:nth-child(2) { width: 29px; padding-left: 6px; }
.pages .page { width: 95px; background: #fff; border-left: 1px solid #a8a6a4; border-bottom: 5px solid #117865; padding-top: 4px; }
.pages .plus { width: 49px; height: 40px; margin-top: 2px; background: #117865; }
.plus svg { stroke: #fff; stroke-width: 4; }

/* visualizations pane */
.viz { width: 226px; border-left: 1px solid #dedcda; display: flex; flex-direction: column; }
.phead { display: flex; justify-content: space-between; align-items: center; height: 50px; padding: 0 10px; }
.phead h2 { font-size: 17px; font-weight: 600; }
.phead svg { stroke: #252423; stroke-width: 1.2; }
.viz h3 { padding: 0 10px; height: 22px; line-height: 16px; }
.modes { display: flex; justify-content: space-between; padding: 0 10px; height: 45px; align-items: flex-start; }
.modes button { height: 40px; width: 40px; }
.modes .on { background: #d2d0ce; border-radius: 2px; }
.caret { display: block; margin: 0 0 -1px 20px; stroke: #8a8886; stroke-width: 2; fill: #f3f2f1; position: relative; }
.gallery { display: grid; grid-template-columns: repeat(6, 35px); grid-auto-rows: 35px; border-top: 1px solid #8a8886; padding: 8px 0 5px 8px; height: 259px; }
.gallery button { margin: 2px; border: 1px solid transparent; }
.gallery .sel { border-color: #605e5c; background: #e1dfdd; }
.gallery svg { width: 24px; height: 24px; }
.gallery .n { font-size: 10px; fill: #2086cc; text-anchor: middle; }
.gallery .ry { font-size: 20px; font-weight: 700; line-height: 28px; color: #2086cc; margin-left: 0; }
.wells { position: relative; flex: 1; border-top: 1px solid #dedcda; padding: 7px 6px 0 5px; }
.wells h4 { height: 30px; padding: 4px 10px; }
.well { min-height: 45px; border: 1px dashed #c8c6c4; background: #fff; padding: 4px 3px; margin-bottom: 9px; }
.well.empty { min-height: 35px; padding: 7px 12px; margin-bottom: 10px; }
.chip { display: flex; align-items: center; height: 28px; background: #edebe9; border: 1px solid #c0bebc; border-radius: 2px; padding: 0 5px; gap: 7px; white-space: nowrap; }
.chip button:first-of-type { margin-left: auto; }
.chip svg { stroke: #444; }
.wells .strong { font-weight: 600; color: #444; }
.cross { display: flex; justify-content: space-between; align-items: center; padding: 0 0 0 10px; height: 30px; }
.cross button { width: 40px; height: 20px; border: 1px solid #605e5c; border-radius: 10px; background: #fff; font-size: 12px; gap: 2px; color: #605e5c; }
.cross i { width: 10px; height: 10px; border-radius: 5px; background: #605e5c; }
.thumb { position: absolute; right: 0; top: 3px; width: 7px; height: 330px; border-radius: 4px; background: #d0cfcd; }

/* data pane */
.data { width: 226px; border-left: 1px solid #dedcda; color: #444; }
.data .phead { color: #252423; }
.dsearch { display: flex; align-items: center; gap: 8px; height: 33px; margin: 7px 5px 12px 5px; padding-left: 9px; border: 1px solid #605e5c; border-radius: 2px; background: #fff; font-size: 16px; color: #605e5c; }
.data svg { stroke: #444; }
.dsearch svg { stroke-width: 1.5; }
.dsearch input { width: 160px; }
.table { display: flex; align-items: center; height: 30px; padding-left: 9px; }
.table .tw { margin-right: 4px; }
.data ul { list-style: none; }
.data li { display: grid; grid-template-columns: 38px 15px 32px 1fr; height: 30px; align-items: center; padding-left: 10px; white-space: nowrap; }
.data li > svg, .data li > b { justify-self: center; }
.data li span { padding-left: 20px; line-height: 0; }
.data input[type=checkbox] { appearance: none; width: 15px; height: 15px; border: 1px solid #8a8886; border-radius: 2px; margin: 0; background: #faf9f8; }
.data input[type=checkbox]:checked { border-color: #117865; background: #117865; display: grid; place-items: center; }
.data input[type=checkbox]:checked::after { content: ""; width: 9px; height: 4px; border: solid #fff; border-width: 0 0 2px 2px; rotate: -45deg; margin-bottom: 3px; }

/* status bar */
.status { height: 30px; border-top: 1px solid #dedcda; display: flex; align-items: center; padding: 0 6px; color: #555; }
.status span:first-child { flex: 1; }
.zoom { display: flex; align-items: center; gap: 5px; font-size: 18px; }
.zoom input { appearance: none; width: 125px; height: 14px; background: linear-gradient(#605e5c, #605e5c) 62px 3px / 2px 8px no-repeat, linear-gradient(#605e5c, #605e5c) 0 6px / 100% 1px no-repeat; }
.zoom input::-webkit-slider-thumb { appearance: none; width: 5px; height: 13px; background: #605e5c; }
.pct { margin: 0 25px 0 22px; }
.fit { margin-right: 28px; }
.fit svg { stroke: #605e5c; }
.status a { color: inherit; text-decoration: none; }

/* taskbar */
.taskbar { height: 60px; background: linear-gradient(90deg, #232323 0, #242323 18%, #2f2119 28%, #302318 60%, #321f15 85%, #282120 100%); color: #fff; display: grid; grid-template-columns: 500px 1fr auto; align-items: center; }
.weather { justify-self: start; text-align: left; gap: 9px; padding-left: 25px; }
.weather em { font-style: normal; color: #c8c6c4; }
.apps { display: flex; align-items: center; height: 60px; }
.apps button { position: relative; width: 50px; height: 50px; margin-left: 5px; }
.apps .start { width: 34px; margin: 0; }
.tsearch { display: flex; align-items: center; width: 238px; height: 38px; border-radius: 19px; background: #f3f3f3; color: #555; margin: 0 1px 0 15px; padding: 0 8px 0 14px; gap: 12px; flex: none; }
.apps .tsearch { margin-right: 36px; }
.apps .tsearch + button { margin-left: 0; }
.tsearch input { flex: 1; }
.tsearch svg { stroke: #222; stroke-width: 2; }
.apps .tsearch { margin-right: 5px; }
.apps .active { background: #40332a; border-radius: 4px; }
.run::after, .active::after { content: ""; position: absolute; bottom: 0; left: 21px; width: 8px; height: 4px; border-radius: 2px; background: #9b948f; }
.active::after { left: 15px; width: 20px; background: #4cc2ff; }
.az span { display: flex; flex-direction: column; align-items: center; justify-content: center; width: 30px; height: 30px; background: #fff; color: #232f3e; font-size: 22px; font-weight: 700; line-height: 18px; padding-bottom: 2px; }
.apps .tsearch { margin-right: 40px; }
.tray { display: flex; align-items: center; padding-right: 24px; }
.tray svg { stroke: #fff; stroke-width: 2; }
.lang { margin: 0 24px 0 26px; }
.net { gap: 10px; margin-right: 24px; }
.clock { text-align: right; }
```
FILE: script.js
```js
// Colour sequence of the treemap; it repeats once exhausted.
const colors = (
  "804fc4 5ecdc8 448cff ff977f eb5454 5a1f71 ee5795 a23a73 be7dff 8ceacf 88d3eb ffbea2 ff7f7f 9333b7 fb83b8 ff8cdd b15cff 6bb09c 509abd c07050 b94b4b 702687 ff5ca4 bc5097 583080 447765 346880 804c36 802f2f 4d1d5d 802f53 " +
  "803768 802f2f 7b661b 2f3437 466b78 804c36 56344b 0b272c 54484a 0069ba 374049 ffb05c a5f415 5f666f 8ea6ee ffe066 a8697c 3359b9 e0d0c0 4a92c6 5f666f ffbe80 c5f55a 80868b a5b7f0 ffe487 b58794 28418c a99c90 185a8c 2a2f38 " +
  "c0854a 8fb526 484b54 6c7fb4 bda84e 7c4d58 1a2b5e 6f665f 0e3a5c 1b1d24 7c5530 5c7c18 303236 475577 7f7034 52343c 0b132c 504c42 000fc0 3a344a ffff5c 37f415 5f5f6a a28cee d0ff66 a87769 5533b9 e0dec0 4a55c6 5f5f6a ffff80 80f55a " +
  "80808b b7a5f0 dcff87 b58f87 3e288c a8a890 1a1f8c 2a2a38 bdbf4a 48b526 484852 7b6cb4 9bbe4e 7c5a4d 2a1a5e 6f705f 0e115c 1b1b24 7c7c30 307c18 303036 504777 667c34 523a34 120b2c 525042 5000c0 40344a a8ff5c 15f455 655f6a ce8cee " +
  "84ff66 a89469 9333b7 d0dec0 7d4ac6 675f6a b9ff80 5af585 86808b dca5f0 a2ff87 b5a887 6c288c 9ca890 46158c 302a38 82bf4a 26b548 4f4852 a06cb4 64be4e 7c704d 4a1a5e 66705f 2e0e5c 221b24 567c30 187c35 323036 6a4777 447c34 524b34 260b2c " +
  "4b5245 a500ba 49344a 5cff65 15f4c9 6d5f6f ee8cd0 66ff90 9ca869 b93395 c0dec0 b84ac6 6c5f6f 80ff80 5af5d0 8b8087 f0a5dc 87ffa8 a9b587 8c2874 90a890 87158c 382a34 4abf4a 26b590 524852 b46ca0 4ebe70 707c4d 5e1a4a 5f705f 560e5c 241b20 " +
  "307c30 187c68 363035 77476a 347c49 4c5234 2c0b22 485245 c0006e 4a343a 5cffb0 15a8f4 6f5f63 ee8ca5 66ffe0 7ca869 b93358 c0decd c64a90 6f5f63 80ffc0 5ac8f5 8b8083 f0a5b7 87ffe4 95b587 8c2841 90a89b 8c155a 382a2d 4abf85 268fb5 524749 " +
  "b46c7c 4ebea7 5a7c4d 5e1a2b 5f7067 5c0e3a 241b1d 307c55 185c7c 363032 77474f 347c6c 3a5234 2c0b12 42524c c00010 4a3a34 5cffff 1537f4 6f615f eea28c 66d0ff 69a877 b95533 c0e0de c64a55 6f615f 80ffff 5a80f5 8b8280 f0b7a5 87dcff 87b58f " +
  "8c3e28 90a8a8 8c151a 382c2a 4abdbf 2648b5 524a48 b47b6c 4e9bbe 4d7c5a 5e2a1a 5f706f 5c0e11 241c1b 307c7c 18307c 363130 775047 34667c 34523a 2c120b 425252 c05000 4a4034 5ca8ff 5515f4 6f665f eece8c 6684ff 69a894 b99333 c0d0de c67d4a " +
  "6f675f 80b9ff 855af5 8b8680 f0dca5 87a2ff 87b5a8 8c6c28 909ca8 8c4615 38302a 4a82bf 4826b5 524f48 b4a06c 4e64be 4d7c70 5e4a1a 5f666f 5c2e0e 24221b 30567c 35187c 363230 776a47 34447c 34524b 2c260b 484b52 baa500 494a34 5c5cff c915f4 " +
  "6d6f5f d0ee8c 9066ff 699ca8 95b933 c0c0de c6b84a 6c6f5f 8080ff d05af5 878b80 dcf0a5 a887ff 87a9b5 748c28 9090a8 8c8715 34382a 4a4abf 9026b5 4f5248 a0b46c 704ebe 4d707c 4a5e1a 5f5f70 5c560e 20241b 30307c 68187c 353630 6a7747 " +
  "49347c 344c52 222c0b 454852 6ec000 3a4a34 b05cff f415a8 636f5f a5ee8c e066ff 697ca8 58b933 cdc0de 90c64a 636f5f c080ff f55ac8 838b80 b7f0a5 e487ff 8795b5 418c28 9b90a8 5a8c15 2d382a 854abf b5268f 4c5248 7cb46c a74ebe " +
  "4d5a7c 2b5e1a 675f70 3a5c0e 1d241b 55307c 7c185c 323630 4f7747 6c347c 343a52 122c0b 4c4852 10c000 344a3a ff5cff f41537 5f6f61 8ceea2 ff66d0 7769a8 33b955 dec0e0 55c64a 5f6f61 ff80ff f55a80 808b82 a5f0b7 ff87dc " +
  "8f87b5 288c3e a890a8 1a8c15 2a382c bf4abd b52648 48524a 6cb47b be4e9b 5a4d7c 1a5e2a 705f6f 115c0e 1b241c 7c307c 7c1830 303631 477750 7c3466 3a3452 0b2c12 524752 00c050 344a40 ff5ca8 f45515 5f6f66 8ceece ff6684 " +
  "9469a8 33b993 dec0d0 4ac67d 5f6f67 ff80b9 f5855a 808b86 a5f0dc ff87a2 a887b5 288c6c a8909c 158c46 2a3830 bf4a82 b54826 48524f 6cb4a0 be4e64 704d7c 1a5e4a 705f66 0e5c2e 1b2422 7c3056 7c3518 303632 47776a 7c3444 4b3452 0b2c26 54494c"
).split(" ");

// Strips in value order: [direction, thickness, number of cells].
// "c" peels a column off the left, "r" peels a row off the top.
const strips = [
  ["c",20,31],["c",18,31],["c",19,32],["c",18,32],["c",19,33],["c",18,33],["c",18,33],["c",18,33],["c",18,33],
  ["r",18,33],["c",18,32],["r",18,31],["c",18,30],["r",18,30],["c",17,29],["r",17,28],["c",17,27],
  ["r",18,27],["c",17,26],["r",18,26],["c",18,25],["r",17,24],["c",17,23],["r",18,22],["c",18,21],
  ["r",17,21],["c",17,20],["r",17,19],["c",17,18],["r",17,17],["c",17,16],["r",17,16],["c",17,15],
  ["r",17,14],["c",17,13],["r",17,13],["c",17,12],["r",17,11],["c",17,10],["r",18,10],["c",17,9],
  ["r",17,8],["c",18,7],["r",17,6],["c",17,5],["r",18,5],["c",19,4],["r",18,3],["c",19,2],["c",10,1]
];

const svg = document.getElementById("treemap");
let x = 0, y = 0, n = 0;
const W = 526, H = 368;

function cell(x0, y0, x1, y1) {
  const r = document.createElementNS("http://www.w3.org/2000/svg", "rect");
  r.setAttribute("x", x0 + 1);
  r.setAttribute("y", y0 + 1);
  r.setAttribute("width", x1 - x0 - 1);
  r.setAttribute("height", y1 - y0 - 1);
  r.setAttribute("fill", "#" + colors[n++ % colors.length]);
  r.setAttribute("stroke", "#e6e5ec");
  svg.appendChild(r);
}

for (const [dir, size, count] of strips) {
  // Cells shrink slightly along a strip, as the values are sorted.
  const at = i => { const t = i / count; return t + 0.04 * t * (1 - t); };
  for (let i = 0; i < count; i++) {
    if (dir === "c") {
      cell(x, y + Math.round((H - y) * at(i)), x + size, y + Math.round((H - y) * at(i + 1)));
    } else {
      cell(x + Math.round((W - x) * at(i)), y, x + Math.round((W - x) * at(i + 1)), y + size);
    }
  }
  if (dir === "c") x += size; else y += size;
}
```
